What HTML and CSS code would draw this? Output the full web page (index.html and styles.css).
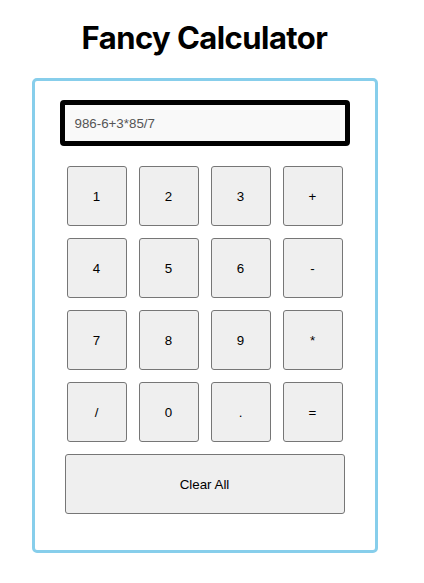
FILE: index.html
```html
<!DOCTYPE html>
<html>
<head>
<meta charset="utf-8">
<link rel="stylesheet" href="styles.css">
</head>
<body>
<div class="page">
  <h1 class="title">Fancy Calculator</h1>
  <div class="calc">
    <div class="display">986-6+3*85/7</div>
    <div class="keys">
      <button class="key">1</button>
      <button class="key">2</button>
      <button class="key">3</button>
      <button class="key">+</button>
      <button class="key">4</button>
      <button class="key">5</button>
      <button class="key">6</button>
      <button class="key">-</button>
      <button class="key">7</button>
      <button class="key">8</button>
      <button class="key">9</button>
      <button class="key">*</button>
      <button class="key">/</button>
      <button class="key">0</button>
      <button class="key">.</button>
      <button class="key">=</button>
    </div>
    <button class="clear">Clear All</button>
  </div>
</div>
</body>
</html>
```

FILE: styles.css
```css
html, body {
  margin: 0;
  padding: 0;
  background: #ffffff;
}

.page {
  width: 409px;
  display: flex;
  flex-direction: column;
  align-items: center;
}

.title {
  font-family: Inter, "Liberation Sans", sans-serif;
  font-weight: 700;
  font-size: 31px;
  letter-spacing: -0.55px;
  line-height: 38px;
  margin: 19px 0 21px;
  color: #000;
}

.calc {
  box-sizing: border-box;
  width: 346px;
  border: 3px solid #87ceeb;
  border-radius: 5px;
  padding: 19px 0 36px;
  display: flex;
  flex-direction: column;
  align-items: center;
}

.display {
  box-sizing: border-box;
  width: 290px;
  height: 46px;
  border: 5px solid #000;
  border-radius: 4px;
  background: #f9f9f9;
  padding: 0 10px;
  display: flex;
  align-items: center;
  font-family: "Liberation Sans", Arial, sans-serif;
  font-size: 13.33px;
  color: #555;
}

.keys {
  margin-top: 20px;
  display: grid;
  grid-template-columns: repeat(4, 60px);
  grid-auto-rows: 60px;
  gap: 12px;
}

.key, .clear {
  box-sizing: border-box;
  background: #efefef;
  border: 1px solid #767676;
  border-radius: 3px;
  font-family: "Liberation Sans", Arial, sans-serif;
  font-size: 13.33px;
  color: #000;
  padding: 0;
  margin: 0;
}

.clear {
  margin-top: 12px;
  width: 280px;
  height: 60px;
}
```
